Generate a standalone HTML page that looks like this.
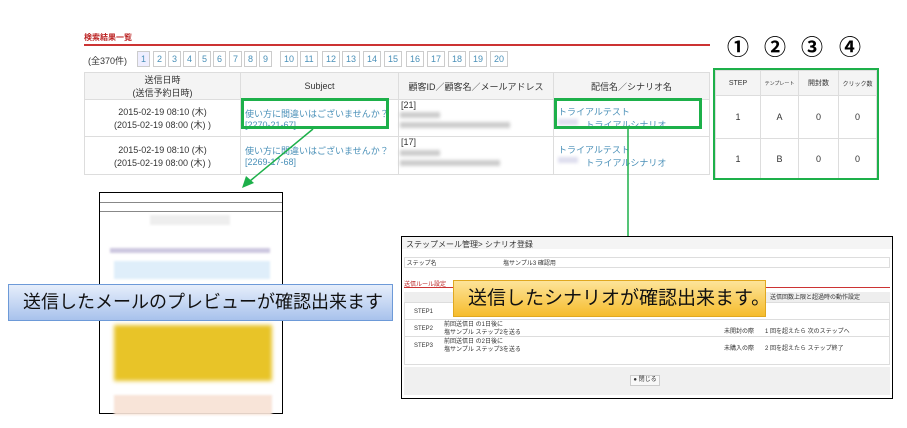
<!DOCTYPE html>
<html><head><meta charset="utf-8"><style>
*{margin:0;padding:0;box-sizing:border-box}
body{width:907px;height:428px;background:#fff;position:relative;overflow:hidden;font-family:"Liberation Sans","Noto Sans CJK JP",sans-serif;color:#333}
.a{position:absolute}
.pg{position:absolute;top:51px;height:16px;border:1px solid #ccc;font-size:9px;color:#4a90b8;text-align:center;line-height:14px}
table{border-collapse:collapse;position:absolute}
td{border:1px solid #ddd;font-size:9px;text-align:center;vertical-align:middle;white-space:nowrap}
.lk{color:#4a90b8;text-align:left;padding-left:4px}
.blur{background:#ccc;filter:blur(1.5px);height:6px;position:absolute}
.lab{white-space:nowrap;overflow:hidden}
</style></head><body>
<div class="a" style="left:84px;top:32px;font-size:8px;color:#b22;font-weight:bold">検索結果一覧</div>
<div class="a" style="left:84px;top:44px;width:626px;height:2px;background:#c33"></div>
<div class="a" style="left:88px;top:54px;font-size:9px">(全370件)</div>
<div class="pg" style="left:137px;width:13px;background:#eef">1</div>
<div class="pg" style="left:153px;width:13px">2</div>
<div class="pg" style="left:168px;width:13px">3</div>
<div class="pg" style="left:183px;width:13px">4</div>
<div class="pg" style="left:198px;width:13px">5</div>
<div class="pg" style="left:213px;width:13px">6</div>
<div class="pg" style="left:229px;width:13px">7</div>
<div class="pg" style="left:244px;width:13px">8</div>
<div class="pg" style="left:259px;width:13px">9</div>
<div class="pg" style="left:280px;width:18px">10</div>
<div class="pg" style="left:300px;width:18px">11</div>
<div class="pg" style="left:322px;width:18px">12</div>
<div class="pg" style="left:342px;width:18px">13</div>
<div class="pg" style="left:363px;width:18px">14</div>
<div class="pg" style="left:384px;width:18px">15</div>
<div class="pg" style="left:406px;width:18px">16</div>
<div class="pg" style="left:427px;width:18px">17</div>
<div class="pg" style="left:448px;width:18px">18</div>
<div class="pg" style="left:469px;width:18px">19</div>
<div class="pg" style="left:490px;width:18px">20</div>

<table style="left:84px;top:72px;width:626px">
<tr style="height:26px;background:#f4f4f4"><td style="width:156px">送信日時<br>(送信予約日時)</td><td style="width:158px">Subject</td><td style="width:155px">顧客ID／顧客名／メールアドレス</td><td>配信名／シナリオ名</td></tr>
<tr style="height:37px"><td>2015-02-19 08:10 (木)<br>(2015-02-19 08:00 (木) )</td><td class="lk">使い方に間違いはございませんか？<br>[2270-21-67]</td><td style="text-align:left;padding-left:2px;vertical-align:top">[21]</td><td class="lk">トライアルテスト<br>&nbsp;&nbsp;&nbsp;&nbsp;&nbsp;&nbsp;&nbsp;&nbsp;&nbsp;&nbsp;&nbsp;トライアルシナリオ</td></tr>
<tr style="height:38px"><td>2015-02-19 08:10 (木)<br>(2015-02-19 08:00 (木) )</td><td class="lk">使い方に間違いはございませんか？<br>[2269-17-68]</td><td style="text-align:left;padding-left:2px;vertical-align:top">[17]</td><td class="lk">トライアルテスト<br>&nbsp;&nbsp;&nbsp;&nbsp;&nbsp;&nbsp;&nbsp;&nbsp;&nbsp;&nbsp;&nbsp;トライアルシナリオ</td></tr>
</table>
<div class="blur" style="left:400px;top:112px;width:40px"></div>
<div class="blur" style="left:400px;top:122px;width:110px"></div>
<div class="blur" style="left:400px;top:150px;width:40px"></div>
<div class="blur" style="left:400px;top:160px;width:100px"></div>
<div class="blur" style="left:558px;top:119px;width:20px;background:#dde"></div>
<div class="blur" style="left:558px;top:157px;width:20px;background:#dde"></div>

<div class="a" style="left:726px;top:30px;font-size:22px;font-weight:bold;color:#000;width:24px;text-align:center">①</div>
<div class="a" style="left:763px;top:30px;font-size:22px;font-weight:bold;color:#000;width:24px;text-align:center">②</div>
<div class="a" style="left:800px;top:30px;font-size:22px;font-weight:bold;color:#000;width:24px;text-align:center">③</div>
<div class="a" style="left:838px;top:30px;font-size:22px;font-weight:bold;color:#000;width:24px;text-align:center">④</div>
<table style="left:715px;top:70px;width:162px">
<tr style="height:25px;background:#f4f4f4"><td style="width:45px;font-size:7px">STEP</td><td style="width:38px;font-size:5px">テンプレート</td><td style="width:40px;font-size:7px">開封数</td><td style="font-size:6px">クリック数</td></tr>
<tr style="height:43px"><td>1</td><td>A</td><td>0</td><td>0</td></tr>
<tr style="height:40px"><td>1</td><td>B</td><td>0</td><td>0</td></tr>
</table>
<div class="a" style="left:713px;top:68px;width:166px;height:112px;border:2px solid #1db04a"></div>
<div class="a" style="left:241px;top:98px;width:148px;height:31px;border:3px solid #1db04a"></div>
<div class="a" style="left:554px;top:98px;width:148px;height:31px;border:3px solid #1db04a"></div>

<svg class="a" style="left:0;top:0" width="907" height="428">
<line x1="313" y1="129" x2="250" y2="181" stroke="#1db04a" stroke-width="1.5"/>
<polygon points="242,188 246,176 254,183" fill="#1db04a"/>
<line x1="628" y1="129" x2="628" y2="270" stroke="#1db04a" stroke-width="1.5"/>
<polygon points="623,268 633,268 628,279" fill="#1db04a"/>
</svg>

<div class="a" style="left:99px;top:192px;width:184px;height:222px;border:1px solid #000;background:#fff">
<div style="position:absolute;left:0;top:9px;width:100%;height:1px;background:#888"></div>
<div style="position:absolute;left:0;top:18px;width:100%;height:1px;background:#888"></div>
<div style="position:absolute;left:50px;top:22px;width:80px;height:10px;background:#eee;filter:blur(1px)"></div>
<div style="position:absolute;left:10px;top:55px;width:160px;height:5px;background:#cdc8e0;filter:blur(1px)"></div>
<div style="position:absolute;left:14px;top:68px;width:156px;height:18px;background:#dfeefa;filter:blur(1px)"></div>
<div style="position:absolute;left:14px;top:132px;width:158px;height:56px;background:#e8c428;filter:blur(2px)"></div>
<div style="position:absolute;left:14px;top:202px;width:158px;height:20px;background:#f8e4d8;filter:blur(1px)"></div>
</div>
<div class="a lab" style="left:8px;top:284px;width:385px;height:37px;border:1px solid #6d9ad8;background:linear-gradient(#e6eefb,#a8c2ec);font-size:18px;color:#111;line-height:35px;padding-left:14px">送信したメールのプレビューが確認出来ます</div>

<div class="a" style="left:401px;top:236px;width:492px;height:163px;border:1px solid #000;background:#fff;font-size:6px;white-space:nowrap">
<div style="position:absolute;left:0;top:0;width:100%;height:12px;background:#f4f4f4;font-size:8px;padding:2px 4px">ステップメール管理&gt; シナリオ登録</div>
<div style="position:absolute;left:2px;top:20px;width:486px;height:11px;border:1px solid #ddd">&nbsp;ステップ名<span style="position:absolute;left:98px">塩サンプル3 確認用</span></div>
<div style="position:absolute;left:2px;top:42px;color:#b22">送信ルール設定</div>
<div style="position:absolute;left:2px;top:50px;width:486px;height:1px;background:#c33"></div>
<div style="position:absolute;left:2px;top:55px;width:486px;height:10px;background:#eee;text-align:right;padding-right:30px">送信回数上限と超過時の動作設定</div>
<div style="position:absolute;left:2px;top:65px;width:486px;height:63px;border:1px solid #ddd"></div>
<div style="position:absolute;left:2px;top:82px;width:486px;height:1px;background:#ddd"></div>
<div style="position:absolute;left:2px;top:99px;width:486px;height:1px;background:#ddd"></div>
<div style="position:absolute;left:12px;top:72px">STEP1</div>
<div style="position:absolute;left:12px;top:89px">STEP2</div><div style="position:absolute;left:42px;top:84px;line-height:8px">前回送信日 の1日後に<br>塩サンプル ステップ2を送る</div><div style="position:absolute;left:322px;top:89px">未開封の際</div><div style="position:absolute;left:363px;top:89px">1 回を超えたら 次のステップへ</div>
<div style="position:absolute;left:12px;top:106px">STEP3</div><div style="position:absolute;left:42px;top:101px;line-height:8px">前回送信日 の2日後に<br>塩サンプル ステップ3を送る</div><div style="position:absolute;left:322px;top:106px">未購入の際</div><div style="position:absolute;left:363px;top:106px">2 回を超えたら ステップ終了</div>
<div style="position:absolute;left:2px;top:130px;width:486px;height:28px;background:#f0f0f0"><div style="position:absolute;left:226px;top:8px;width:30px;height:11px;border:1px solid #ccc;background:#f8f8f8;text-align:center;line-height:9px">● 閉じる</div></div>
</div>
<div class="a lab" style="left:453px;top:280px;width:313px;height:37px;border:1px solid #e0a820;background:linear-gradient(#fde49a,#f6bc2c);font-size:19px;color:#111;line-height:35px;padding-left:14px">送信したシナリオが確認出来ます。</div>
</body></html>
